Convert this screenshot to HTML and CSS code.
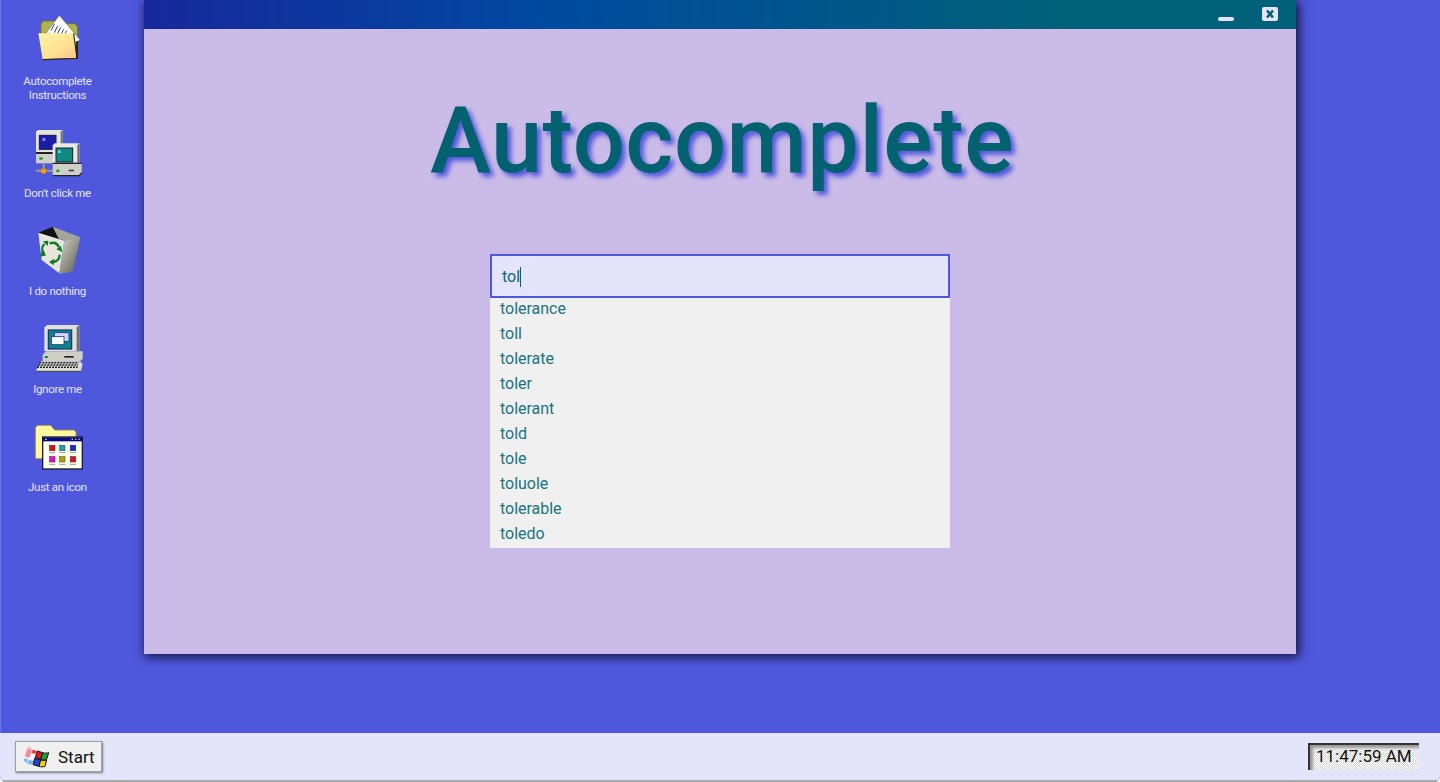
FILE: index.html
```html
<!DOCTYPE html>
<html lang="en">
<head>
<meta charset="utf-8">
<title>Autocomplete</title>
<link rel="stylesheet" href="styles.css">
</head>
<body>
<div class="screen">
  <main class="desktop">
    <ul class="icons">
      <li class="icon">
        <svg class="glyph" viewBox="81 42 180 180">
          <defs>
            <linearGradient id="fold" x1="0" y1="0" x2="1" y2="1"><stop offset="0" stop-color="#fff6a8"/><stop offset=".6" stop-color="#fde090"/><stop offset="1" stop-color="#fcc090"/></linearGradient>
          </defs>
          <path d="M120 72l6-9h40l8 8h48l8 10v62h-110z" fill="#b2b24a" stroke="#6f6f28" stroke-width="2.5"/>
          <path d="M175 46l62 73-18 12-84-32z" fill="#fff" stroke="#444" stroke-width="1.5"/>
          <path d="M160 72l-10 20M170 78l-10 20M179 82l-10 20M188 88l-10 18M197 92l-8 16" stroke="#2a3f96" stroke-width="3"/>
          <path d="M112 100h106l10 74-103 4z" fill="url(#fold)"/>
          <path d="M218 100l10 75-103 4" fill="none" stroke="#2c2c10" stroke-width="3.5"/>
          <path d="M228 124v52" stroke="#1c1c10" stroke-width="5"/>
        </svg>
        <span class="label">Autocomplete<br>Instructions</span>
      </li>
      <li class="icon">
        <svg class="glyph" viewBox="81 378 180 180">
          <path d="M105 395l6-5h74v70h-80z" fill="#e4e4e0"/>
          <path d="M185 390v68h-6V395z" fill="#6f6f68"/>
          <rect x="115" y="406" width="50" height="42" fill="#1c1fa6" stroke="#1a1a40" stroke-width="3"/>
          <rect x="124" y="414" width="9" height="9" fill="#6c8cf0"/>
          <rect x="105" y="456" width="70" height="6" fill="#222"/>
          <path d="M105 462h60v28h-60z" fill="#cfcfc7"/>
          <rect x="115" y="472" width="10" height="7" fill="#0a9a30"/>
          <path d="M128 490v32M105 512h55" stroke="#9a9a94" stroke-width="6"/>
          <rect x="120" y="505" width="15" height="15" fill="#f0a020" stroke="#a06010"/>
          <path d="M155 436l6-6h74v58h-80z" fill="#e8e8e4"/>
          <path d="M235 430v58h-6V435z" fill="#6f6f68"/>
          <rect x="165" y="444" width="50" height="42" fill="#128a84" stroke="#1a1a30" stroke-width="3"/>
          <rect x="171" y="451" width="8" height="8" fill="#60e0d8"/>
          <path d="M155 490h87v28l-8 10h-79z" fill="#cfcfc7"/>
          <path d="M155 490h87M155 527h80l7-9" fill="none" stroke="#222" stroke-width="3.5"/>
          <rect x="166" y="509" width="9" height="7" fill="#0a9a30"/>
          <rect x="203" y="509" width="16" height="5" fill="#444"/>
        </svg>
        <span class="label">Don't click me</span>
      </li>
      <li class="icon">
        <svg class="glyph" viewBox="81 42 180 180">
          <defs>
            <linearGradient id="binside" x1="0" y1="0" x2="1" y2="1"><stop offset="0" stop-color="#d8d8cc"/><stop offset="1" stop-color="#55554c"/></linearGradient>
          </defs>
          <path d="M155 50l83 32-45 10-70-25z" fill="#a6a698"/>
          <path d="M112 68l43-18 20 40z" fill="#111"/>
          <path d="M112 68l78 24-15 98-53-40z" fill="#e6e6dc"/>
          <path d="M190 92l48-10-23 103-40 6z" fill="url(#binside)"/>
          <g fill="none" stroke="#0f7a20" stroke-width="7">
            <path d="M130 132c-8-10-8-22 0-30"/>
            <path d="M146 100c12-4 22-2 28 12"/>
            <path d="M176 134c0 12-8 20-20 22"/>
          </g>
          <path d="M126 94l16-2-2 16zM166 118l14-10 4 18zM160 146l-2 20-14-10zM122 122l14 14-18 4z" fill="#0f7a20"/>
        </svg>
        <span class="label">I do nothing</span>
      </li>
      <li class="icon">
        <svg class="glyph" viewBox="81 336 180 180">
          <path d="M130 352l9-7h96v78h-105z" fill="#e0e0da"/>
          <path d="M235 345v78h-8v-72z" fill="#6f6f68"/>
          <rect x="142" y="360" width="70" height="57" fill="#0a8688" stroke="#1a2f70" stroke-width="3.5"/>
          <rect x="160" y="368" width="44" height="26" fill="#cdd6ff" stroke="#20308a" stroke-width="2.5"/>
          <rect x="151" y="380" width="38" height="24" fill="#fff" stroke="#20308a" stroke-width="2.5"/>
          <path d="M125 434l10-10h110v22l-8 8H125z" fill="#cfcfc7"/>
          <rect x="131" y="438" width="10" height="6" fill="#0a9a30"/>
          <rect x="190" y="438" width="28" height="5" fill="#222"/>
          <path d="M120 454h117l8 8-5 22H104z" fill="#dcdcd4"/>
          <path d="M115 458h118M112 465h119M108 472h122" stroke="#222" stroke-width="4.5" stroke-dasharray="6 3"/>
          <path d="M104 484h136" stroke="#444" stroke-width="3"/>
        </svg>
        <span class="label">Ignore me</span>
      </li>
      <li class="icon">
        <svg class="glyph" viewBox="81 630 180 180">
          <path d="M103 652l8-6h38l12 14h58l6 6v20h-100v60h-22z" fill="#fff6a0" stroke="#908a40" stroke-width="2.5"/>
          <rect x="125" y="681" width="119" height="96" fill="#fffff0" stroke="#1a1a2a" stroke-width="4"/>
          <rect x="126" y="682" width="117" height="12" fill="#0a0a80"/>
          <path d="M132 688h5M212 688h4M222 688h4M232 688h4" stroke="#fff" stroke-width="3"/>
          <rect x="146" y="706" width="16" height="16" fill="#e01010" stroke="#400" stroke-width="1.5"/>
          <rect x="176" y="706" width="16" height="16" fill="#10a8a8" stroke="#044" stroke-width="1.5"/>
          <rect x="208" y="706" width="16" height="16" fill="#1030e0" stroke="#004" stroke-width="1.5"/>
          <rect x="146" y="740" width="16" height="16" fill="#e010d0" stroke="#404" stroke-width="1.5"/>
          <rect x="176" y="740" width="16" height="16" fill="#b0a010" stroke="#440" stroke-width="1.5"/>
          <rect x="208" y="740" width="16" height="16" fill="#e01030" stroke="#400" stroke-width="1.5"/>
          <path d="M145 728h18M175 728h18M207 728h18M145 763h18M175 763h18M207 763h18" stroke="#999" stroke-width="3"/>
        </svg>
        <span class="label">Just an icon</span>
      </li>
    </ul>

    <section class="window">
      <header class="titlebar">
        <span class="minimize"></span>
        <span class="close">
          <svg viewBox="0 0 16 14"><path d="M5 3.5l6 7M11 3.5l-6 7" stroke="#04616f" stroke-width="2.6"/></svg>
        </span>
      </header>
      <div class="content">
        <h1 class="heading">Autocomplete</h1>
        <div class="search">
          <div class="input">tol<span class="caret"></span></div>
          <ul class="results">
            <li>tolerance</li>
            <li>toll</li>
            <li>tolerate</li>
            <li>toler</li>
            <li>tolerant</li>
            <li>told</li>
            <li>tole</li>
            <li>toluole</li>
            <li>tolerable</li>
            <li>toledo</li>
          </ul>
        </div>
      </div>
    </section>
  </main>

  <footer class="taskbar">
    <button class="start" type="button">
      <svg class="flag" viewBox="70 55 75 66">
        <path d="M72 86l8-22 14 4-8 22z" fill="#f08c98"/>
        <path d="M82 58l12 4-3 6-12-4z" fill="#f4a8b0"/>
        <path d="M70 92l12 3-4 12-8-8zM84 96l14 3-4 12-14-3z" fill="#78b8f0"/>
        <path d="M96 66l12 3-4 10-12-3z" fill="#e84040"/>
        <path d="M110 70l16 5-6 20-16-5z" fill="#e01818" stroke="#111" stroke-width="3"/>
        <path d="M126 75c6 2 12 2 18 0l-6 20c-6 2-12 2-18 0z" fill="#18a030" stroke="#111" stroke-width="3"/>
        <path d="M102 92l18 5-5 19-18-5z" fill="#2040e0" stroke="#111" stroke-width="3"/>
        <path d="M120 97c6 2 12 2 18 0l-5 19c-6 2-12 2-18 0z" fill="#f8d010" stroke="#111" stroke-width="3"/>
      </svg>
      <span class="start-text">Start</span>
    </button>
    <time class="clock">11:47:59 AM</time>
  </footer>
</div>
</body>
</html>
```

FILE: styles.css
```css
* { box-sizing: border-box; }
html, body { margin: 0; height: 100%; }
body { background: #fff; font-family: "Roboto", "Liberation Sans", sans-serif; overflow: hidden; }

.screen { height: 782px; display: flex; flex-direction: column; background: #4f58dc; border-radius: 0 0 6px 6px; overflow: hidden; }

.desktop { position: relative; flex: 1; min-height: 0; background: #4f58dc; border-left: 1px solid #6a72e4; }

.icons { list-style: none; margin: 0; padding: 14px 0 0; width: 113px; display: flex; flex-direction: column; gap: 24px; }
.icon { display: flex; flex-direction: column; align-items: center; }
.glyph { width: 60px; height: 60px; display: block; }
.label { font-size: 11.5px; letter-spacing: -0.3px; line-height: 14px; color: #e4e4fa; text-align: center; white-space: nowrap; }

.window { position: absolute; left: 143px; top: 0; width: 1152px; height: 654px; background: #cbbbe8; box-shadow: 2px 2px 10px 1px #14143c; display: flex; flex-direction: column; }
.titlebar { height: 29px; flex: none; display: flex; justify-content: flex-end; align-items: flex-start; padding: 7px 18px 0 0; gap: 28px; background: linear-gradient(90deg, #17289c, #004aa0 35%, #006178 80%, #006178); }
.minimize { width: 16px; height: 4px; margin-top: 10px; border-radius: 2px; background: #e4e4fa; }
.close { width: 16px; height: 14px; border-radius: 2px; background: #e4e4fa; display: block; }
.close svg { display: block; width: 16px; height: 14px; }

.content { flex: 1; display: flex; flex-direction: column; align-items: center; }
.heading { margin: 52px 0 0 4px; height: 173px; font-family: "Roboto", sans-serif; font-weight: 500; font-size: 92px; letter-spacing: 0.5px; line-height: 120px; color: #04616f; text-shadow: 4px 4px 5px #4f58dc; }

.search { width: 460px; }
.input { height: 44px; border: 2px solid #4f58dc; background: #e4e4fa; color: #0c6878; font-size: 16px; line-height: 40px; padding: 2px 0 0 10px; display: flex; align-items: center; }
.caret { width: 1px; height: 20px; background: #04616f; }
.results { list-style: none; margin: 0; padding: 0; background: #f0f0f0; }
.results li { height: 25px; line-height: 22px; padding-left: 10px; font-size: 16px; letter-spacing: -0.02px; color: #1a7482; }

.taskbar { height: 49px; flex: none; display: flex; justify-content: space-between; align-items: flex-start; padding: 8px 21px 0 15px; background: #e4e4fa; border-bottom: 2px solid #a8a8a8; }
.start { width: 87px; height: 31px; padding: 0 0 0 8px; display: flex; align-items: center; gap: 9px; background: #f0f0f0; border: 1px solid #a0a0a0; box-shadow: 1px 1px 2px #777; cursor: pointer; }
.flag { width: 25px; height: 22px; display: block; flex: none; }
.start-text { font-family: "Roboto", sans-serif; font-size: 17px; color: #111; }
.clock { width: 111px; height: 27px; margin-top: 2px; padding-left: 6px; display: block; font-family: "Roboto", sans-serif; font-size: 17px; line-height: 23px; color: #111; white-space: nowrap; border-top: 2px solid #333; border-left: 2px solid #333; box-shadow: inset 3px 3px 3px #999; background: conic-gradient(#fff 25%, #d8d8d8 0 50%, #fff 0 75%, #d8d8d8 0) 0 0 / 2px 2px; }
```
